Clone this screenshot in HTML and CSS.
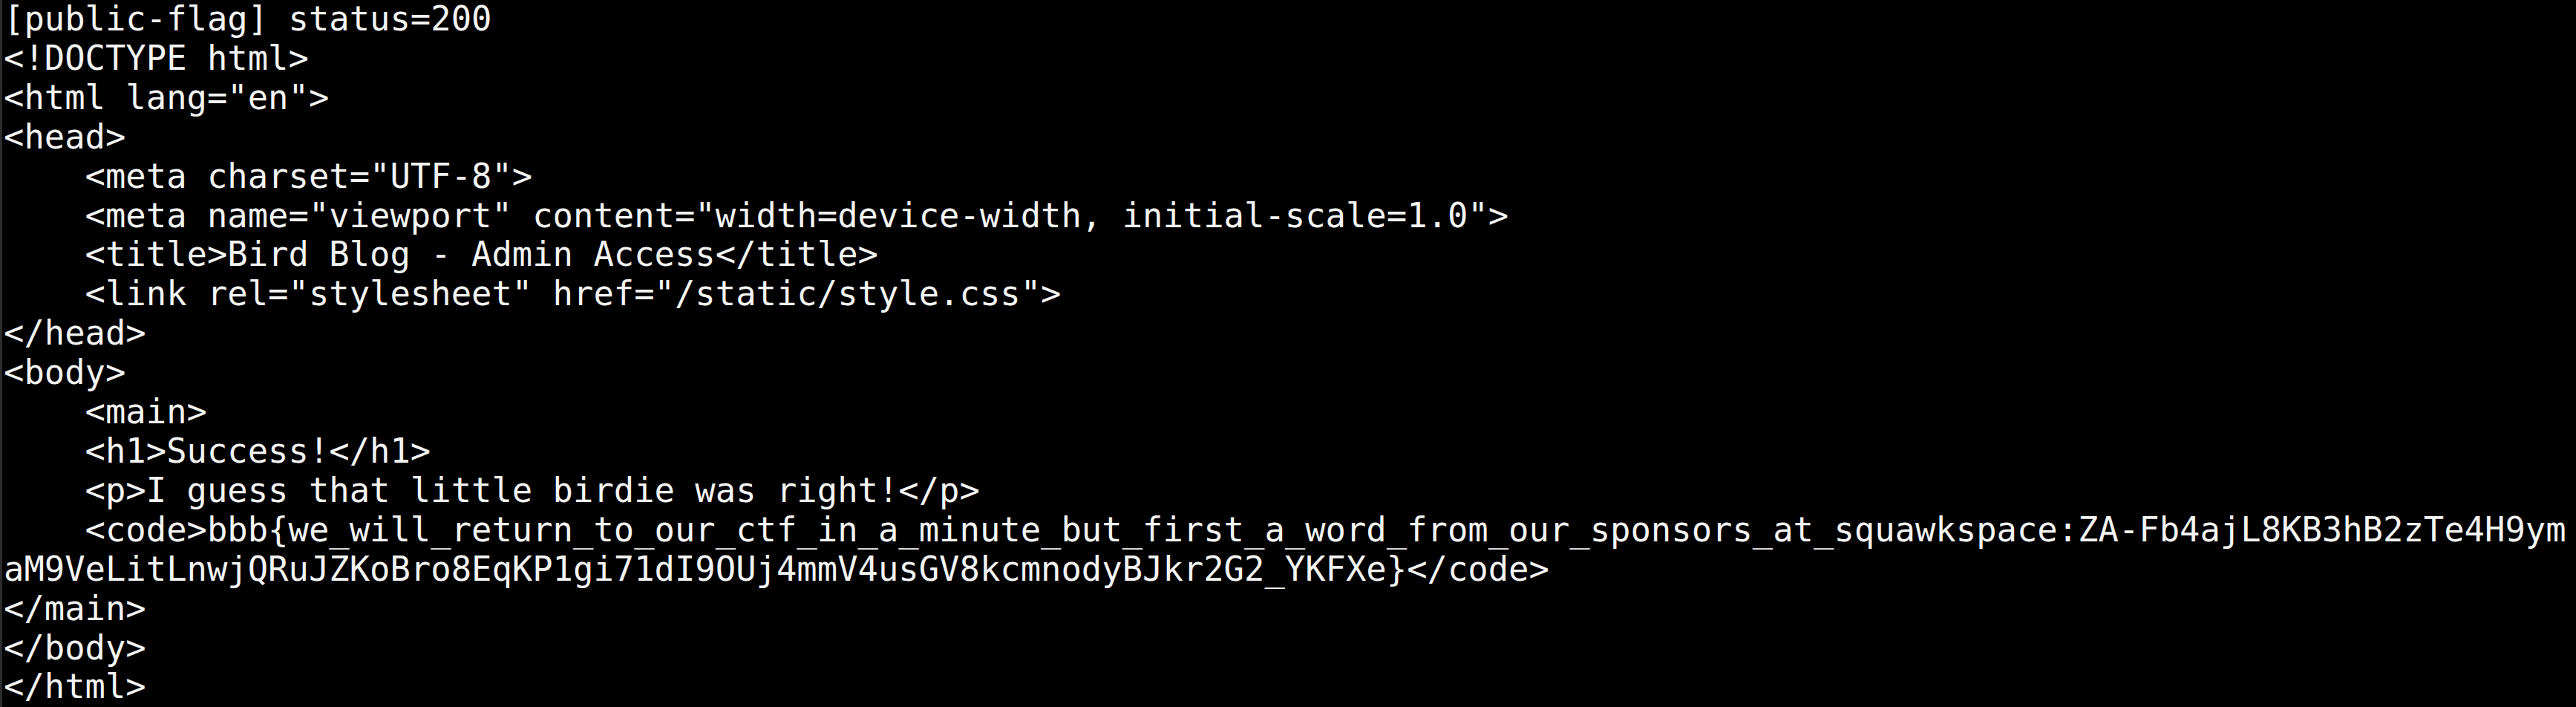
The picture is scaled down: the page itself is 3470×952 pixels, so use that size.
FILE: index.html
```html
<!DOCTYPE html>
<html lang="en">
<head>
<meta charset="UTF-8">
<title>Terminal</title>
<link rel="stylesheet" href="styles.css">
</head>
<body>
<div class="term">
<pre class="out">[public-flag] status=200
&lt;!DOCTYPE html&gt;
&lt;html lang="en"&gt;
&lt;head&gt;
    &lt;meta charset="UTF-8"&gt;
    &lt;meta name="viewport" content="width=device-width, initial-scale=1.0"&gt;
    &lt;title&gt;Bird Blog - Admin Access&lt;/title&gt;
    &lt;link rel="stylesheet" href="/static/style.css"&gt;
&lt;/head&gt;
&lt;body&gt;
    &lt;main&gt;
    &lt;h1&gt;Success!&lt;/h1&gt;
    &lt;p&gt;I guess that little birdie was right!&lt;/p&gt;
    &lt;code&gt;bbb{we_will_return_to_our_ctf_in_a_minute_but_first_a_word_from_our_sponsors_at_squawkspace:ZA-Fb4ajL8KB3hB2zTe4H9ym
aM9VeLitLnwjQRuJZKoBro8EqKP1gi71dI9OUj4mmV4usGV8kcmnodyBJkr2G2_YKFXe}&lt;/code&gt;
&lt;/main&gt;
&lt;/body&gt;
&lt;/html&gt;</pre>
</div>
</body>
</html>
```

FILE: styles.css
```css
html, body {
  margin: 0;
  padding: 0;
  background: #000;
  height: 100%;
  overflow: hidden;
}
.term {
  height: 952px;
  background: #000;
  border-left: 3px solid #2c2c2c;
  padding-left: 2px;
  box-sizing: border-box;
}
.out {
  margin: 0;
  font-family: "DejaVu Sans Mono", "Liberation Mono", monospace;
  font-size: 45.5px;
  line-height: 52.9px;
  color: #f4f4f4;
  white-space: pre;
}
```
